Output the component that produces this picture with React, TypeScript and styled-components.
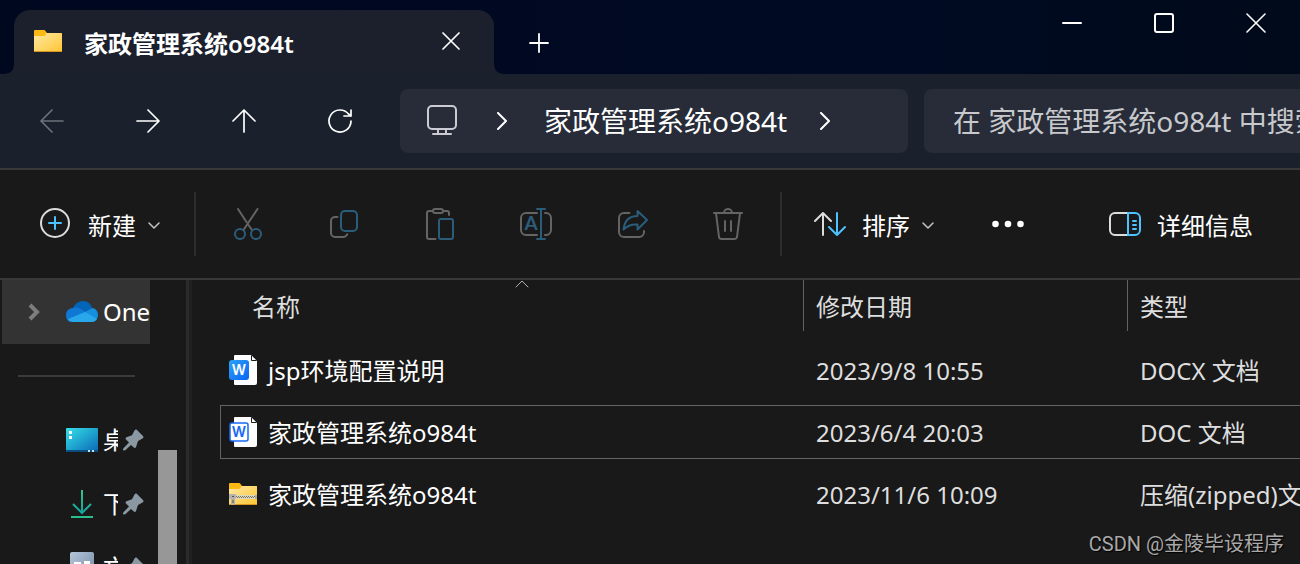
import React from "react";
import styled, { createGlobalStyle, css } from "styled-components";

const GlobalStyle = createGlobalStyle`
  *, *::before, *::after { box-sizing: border-box; }
  body {
    margin: 0;
    background: #191919;
    color: #ffffff;
    font-family: "Noto Sans", "Noto Sans CJK SC", sans-serif;
    font-size: 24px;
    line-height: 32px;
    overflow: hidden;
  }
  button, input {
    font: inherit;
    color: inherit;
    background: none;
    border: 0;
    margin: 0;
    padding: 0;
  }
  svg { display: block; flex: none; }
`;

const Window = styled.div`
  display: flex;
  flex-direction: column;
  height: 100vh;
  overflow: hidden;
`;

const TitleBar = styled.header`
  display: flex;
  height: 74px;
  padding-left: 14px;
  background: linear-gradient(90deg, #000820, #000a22 70%, #000a1a);
`;

const Tab = styled.div`
  position: relative;
  display: flex;
  align-items: center;
  width: 480px;
  margin-top: 10px;
  padding: 0 33px 2px 20px;
  border-radius: 16px 16px 0 0;
  background: #1b202c;

  &::before, &::after {
    content: "";
    position: absolute;
    bottom: 0;
    width: 8px;
    height: 8px;
  }
  &::before {
    right: 100%;
    background: radial-gradient(circle at 0 0, transparent 7px, #1b202c 8px);
  }
  &::after {
    left: 100%;
    background: radial-gradient(circle at 100% 0, transparent 7px, #1b202c 8px);
  }
`;

const TabTitle = styled.span`
  flex: 1;
  margin-left: 22px;
  padding-top: 6px;
  font-weight: 700;
  white-space: nowrap;
`;

const Latin = styled.span`
  font-weight: 600;
`;

const PlainButton = styled.button`
  display: flex;
  align-items: center;
  justify-content: center;
`;

const NewTab = styled(PlainButton)`
  width: 90px;
  padding-top: 12px;
`;

const WindowButtons = styled.div`
  display: flex;
  margin-left: auto;
  height: 46px;
`;

const WindowButton = styled(PlainButton)`
  width: 92px;
  padding-left: 4px;
`;

const NavBar = styled.nav`
  display: flex;
  align-items: center;
  height: 96px;
  padding-left: 4px;
  background: #1a202c;
  border-bottom: 2px solid #3b3838;
`;

const NavButton = styled(PlainButton)<{ $dim?: boolean }>`
  width: 96px;
  height: 64px;
  color: ${(p) => (p.$dim ? "#6d7078" : "#ffffff")};
`;

const field = css`
  height: 64px;
  font-size: 28px;
`;

const AddressBar = styled.div`
  ${field}
  display: flex;
  flex: 1;
  align-items: center;
  min-width: 0;
  margin-left: 12px;
  padding-left: 26px;
  border-radius: 8px;
  background: #272c38;
  white-space: nowrap;
`;

const PlaceIcon = styled.span`
  margin-right: 38px;
  padding-bottom: 2px;
`;

const Crumb = styled.button`
  padding: 0 32px 0 36px;
  line-height: 40px;
`;

const SearchBox = styled.input`
  ${field}
  width: 376px;
  margin-left: 16px;
  padding-left: 29px;
  border-radius: 8px 0 0 8px;
  background: #272c38;
  outline: none;

  &::placeholder { color: #c8c9cc; opacity: 1; }
`;

const CommandBar = styled.div`
  display: flex;
  align-items: center;
  height: 110px;
  padding: 0 47px 0 40px;
  border-bottom: 2px solid #3b3838;
`;

const Command = styled.button<{ $end?: boolean }>`
  display: flex;
  align-items: center;
  gap: 16px;
  height: 64px;
  margin-left: ${(p) => (p.$end ? "auto" : "0")};
  white-space: nowrap;
`;

const CommandLabel = styled.span`
  display: flex;
  align-items: center;
  gap: 12px;
  padding-top: 4px;
`;

const IconCommand = styled(PlainButton)`
  width: 96px;
  height: 64px;
`;

const Separator = styled.span<{ $before: number; $after: number }>`
  width: 2px;
  height: 64px;
  margin: 0 ${(p) => p.$after}px 0 ${(p) => p.$before}px;
  background: #2d2d2d;
`;

const More = styled(PlainButton)`
  width: 148px;
  height: 64px;
`;

const Body = styled.main`
  display: flex;
  flex: 1;
  min-height: 0;
`;

const Sidebar = styled.aside`
  display: flex;
  flex: none;
  width: 189px;
  padding-left: 2px;
  border-right: 3px solid #2b2b2b;
`;

const Tree = styled.div`
  width: 148px;
  overflow: hidden;
`;

const TreeRow = styled.div<{ $selected?: boolean }>`
  display: flex;
  align-items: center;
  height: 64px;
  padding-left: ${(p) => (p.$selected ? 24 : 64)}px;
  background: ${(p) => (p.$selected ? "#333333" : "transparent")};
  white-space: nowrap;
`;

const TreeLabel = styled.span<{ $clip?: boolean }>`
  flex: none;
  width: ${(p) => (p.$clip ? "15px" : "auto")};
  margin-left: 5px;
  overflow: hidden;
`;

const TreeDivider = styled.hr`
  height: 2px;
  margin: 31px 15px 31px 16px;
  border: 0;
  background: #3a3a3a;
`;

const Expander = styled(PlainButton)`
  width: 16px;
  height: 32px;
  margin-right: 24px;
`;

const Pin = styled.span`
  margin-left: 5px;
`;

const ScrollTrack = styled.div`
  width: 19px;
  margin-left: 8px;
  padding-top: 170px;
`;

const ScrollThumb = styled.div`
  height: 100%;
  background: #979797;
`;

const Listing = styled.section`
  flex: 1;
  min-width: 0;
  padding-left: 28px;
  border-left: 3px solid #202020;
  overflow: hidden;
`;

const Table = styled.table`
  width: calc(100% + 8px);
  margin-top: -8px;
  border-spacing: 0 8px;
  table-layout: fixed;
  color: #dedede;
`;

const Head = styled.th<{ $width?: number }>`
  width: ${(p) => (p.$width ? `${p.$width}px` : "auto")};
  height: 55px;
  padding: 0;
  font-weight: 400;
  text-align: left;
  vertical-align: top;
`;

const HeadLabel = styled.div<{ $first?: boolean }>`
  position: relative;
  height: 51px;
  margin-left: ${(p) => (p.$first ? 20 : 0)}px;
  padding: 11px 0 0 12px;
  border-left: ${(p) => (p.$first ? "0" : "1px solid #636363")};
`;

const SortCaret = styled.span`
  position: absolute;
  top: 0;
  left: calc(50% - 7px);
`;

const FileRow = styled.tr<{ $focused?: boolean }>`
  outline: ${(p) => (p.$focused ? "1px solid #636363" : "none")};
  outline-offset: -1px;
`;

const Cell = styled.td`
  height: 54px;
  padding: 0 0 0 13px;
  overflow: hidden;
  white-space: nowrap;
`;

const NameCell = styled(Cell)`
  padding-left: 9px;
  color: #ffffff;
`;

const FileName = styled.div`
  display: flex;
  align-items: center;
  gap: 11px;
`;

const CellText = styled.span`
  display: block;
  padding-top: 2px;
`;

const Watermark = styled.div`
  position: absolute;
  right: 16px;
  bottom: 6px;
  font-family: Roboto, "Noto Sans CJK SC", sans-serif;
  font-size: 20px;
  line-height: 28px;
  color: #a9a9a9;
  text-shadow: 1px 1px 1px #000000;
`;

const GRAY = "#646464";
const BLUE = "#2b5d7a";
const BRIGHT = "#4cc2ff";

type StrokeProps = {
  w?: number;
  h?: number;
  color?: string;
  width?: number;
  children: React.ReactNode;
};

const Stroke = ({ w = 32, h = 32, color = "currentColor", width = 2, children }: StrokeProps) => (
  <svg width={w} height={h} viewBox={`0 0 ${w} ${h}`} fill="none" stroke={color} strokeWidth={width} strokeLinecap="round" strokeLinejoin="round" aria-hidden="true">
    {children}
  </svg>
);

const FolderIcon = ({ zipped }: { zipped?: boolean }) => (
  <svg width="28" height="24" viewBox="0 0 28 24" aria-hidden="true">
    <defs>
      <linearGradient id="folder" x1="0" y1="0" x2="1" y2="1">
        <stop offset="0" stopColor="#ffe9a6" />
        <stop offset="1" stopColor="#ffc531" />
      </linearGradient>
    </defs>
    <path d="M0 2a1 1 0 0 1 1-1h8.500c1 0 1.500.3 2 1l1.500 2H27a1 1 0 0 1 1 1v4H0z" fill="#fdb813" />
    <path d="M0 7h9.500c1 0 1.500-.3 2-1l1-2H27a1 1 0 0 1 1 1v17a1 1 0 0 1-1 1H1a1 1 0 0 1-1-1z" fill="url(#folder)" />
    <path d="M0 22h28a1 1 0 0 1-1 1H1a1 1 0 0 1-1-1z" fill="#d9961c" />
    {zipped && (
      <>
        <path d="M5 13h23v4H5z" fill="#ddd6c0" />
        <path d="M7 14.500h20" stroke="#7a7360" strokeWidth="1" strokeDasharray="1 1" />
        <path d="M8 15.500h20" stroke="#7a7360" strokeWidth="1" strokeDasharray="1 1" />
        <path d="M0 12h6a1 1 0 0 1 1 1v3a1 1 0 0 1-1 1v5a1 1 0 0 1-1 1H3a1 1 0 0 1-1-1v-5H0z" fill="#b5b2ac" />
        <path d="M3 14h2v1H3zM3.500 18h1v3h-1z" fill="#55524c" />
        <path d="M26 13h2v4h-2z" fill="#a9a69c" />
      </>
    )}
  </svg>
);

const WordIcon = ({ outlined }: { outlined?: boolean }) => (
  <svg width="28" height="32" viewBox="0 0 28 32" aria-hidden="true">
    <defs>
      <linearGradient id="doc" x1="0" y1="0" x2="1" y2="1">
        <stop offset="0" stopColor="#2ba3f8" />
        <stop offset="1" stopColor="#0a64f5" />
      </linearGradient>
    </defs>
    <path d="M6 1h16l6 6v22a2 2 0 0 1-2 2H6a1 1 0 0 1-1-1V2a1 1 0 0 1 1-1z" fill="#fdfdff" />
    <path d="M22 1l6 6h-5a1 1 0 0 1-1-1z" fill="#191919" />
    <path d="M23 2l4 4h-4z" fill="#ffffff" />
    {outlined ? (
      <rect x="1" y="7" width="18" height="18" rx="2" fill="#ffffff" stroke="#1769f5" strokeWidth="1.500" />
    ) : (
      <rect x="0" y="6" width="20" height="20" rx="3" fill="url(#doc)" />
    )}
    <text x="10" y="21" textAnchor="middle" fontFamily="Inter, sans-serif" fontWeight="600" fontSize="14" fill={outlined ? "#1769f5" : "#ffffff"}>W</text>
  </svg>
);

const CloudIcon = () => (
  <svg width="32" height="22" viewBox="0 0 32 22" aria-hidden="true">
    <path d="M7 7C9 3 12 0 17 0c5 0 8 3 9 7l-9 6z" fill="#0364b8" />
    <path d="M7 7c3-1 6 0 8 1l9 6-20 7C1 20 0 17 0 14c0-4 3-7 7-7z" fill="#0f78d4" />
    <path d="M19 11l7-4c4 0 6 4 6 7 0 2-1 4-2 5l-12-5z" fill="#1490df" />
    <path d="M2 18l17-7 12 7c-1 2-3 3-5 3H7c-2 0-4-1-5-3z" fill="#28a8ea" />
  </svg>
);

const DesktopIcon = () => (
  <svg width="32" height="24" viewBox="0 0 32 24" aria-hidden="true">
    <defs>
      <linearGradient id="desktop" x1="0" y1="0" x2="1" y2="1">
        <stop offset="0" stopColor="#35e0e6" />
        <stop offset="1" stopColor="#0a68b8" />
      </linearGradient>
    </defs>
    <rect width="32" height="24" rx="1" fill="url(#desktop)" />
    <path d="M0 22h32v1a1 1 0 0 1-1 1H1a1 1 0 0 1-1-1z" fill="#0b4d7c" />
    <path d="M3 3h3v3H3zM3 8h3v3H3z" fill="#ffffff" />
    <path d="M22 22h2v2h-2zM26 22h2v2h-2z" fill="#c8e2f2" />
  </svg>
);

const DownloadIcon = () => (
  <svg width="32" height="32" viewBox="0 0 32 32" fill="none" strokeWidth="2" aria-hidden="true">
    <defs>
      <linearGradient id="download" gradientUnits="userSpaceOnUse" x1="0" y1="2" x2="0" y2="26">
        <stop offset="0" stopColor="#35c48a" />
        <stop offset="1" stopColor="#11a39f" />
      </linearGradient>
    </defs>
    <path d="M16 2v23M7 16l9 9 9-9" stroke="url(#download)" />
    <path d="M5 29h22" stroke="#2bbd90" />
  </svg>
);

const DocumentsIcon = () => (
  <svg width="32" height="32" viewBox="0 0 32 32" aria-hidden="true">
    <defs>
      <linearGradient id="documents" x1="0" y1="0" x2="1" y2="1">
        <stop offset="0" stopColor="#b6c6d8" />
        <stop offset="1" stopColor="#6c86a4" />
      </linearGradient>
    </defs>
    <rect x="4" y="0" width="24" height="32" rx="2" fill="url(#documents)" />
    <path d="M8 10h7v2H8zM18 9h6v3h-6z" fill="#ffffff" />
  </svg>
);

const PinIcon = () => (
  <svg width="22" height="22" viewBox="0 0 22 22" aria-hidden="true">
    <path d="M11.500 1.500c.5-1 1.500-1.300 2.500-.5l6 6c.8 1 .5 2-.5 2.500l-4.500 2.500-2 6c-.3 1-1.500 1.300-2.200.5L8 16 2 21.500 0 21.200.2 19.500l5.800-6L3 10.500c-.8-.8-.5-1.800.5-2.200l5.500-2z" fill="#8c98a1" />
  </svg>
);

const ChevronDown = () => (
  <Stroke w={12} h={8} color="#c4c4c4" width={1.5}><path d="M1 1l5 5 5-5" /></Stroke>
);

const ChevronRight = () => (
  <Stroke w={12} h={18}><path d="M2 1l8 8-8 8" /></Stroke>
);

const editCommands = [
  {
    name: "剪切",
    icon: (
      <Stroke color={GRAY}>
        <path d="M6 1l8.500 13M16.500 17l3.500 5M25.500 1L11.500 22" />
        <g stroke={BLUE}><circle cx="8" cy="26" r="5" /><circle cx="24" cy="26" r="5" /></g>
      </Stroke>
    ),
  },
  {
    name: "复制",
    icon: (
      <Stroke color={GRAY}>
        <path d="M9.500 9H7a4 4 0 0 0-4 4v12a4 4 0 0 0 4 4h8c2 0 3.500-1 4.300-2.800" />
        <rect x="13" y="3" width="16" height="20" rx="4" stroke={BLUE} />
      </Stroke>
    ),
  },
  {
    name: "粘贴",
    icon: (
      <Stroke color={GRAY}>
        <path d="M8 3H5a2 2 0 0 0-2 2v24a2 2 0 0 0 2 2h6.500M20 3h3a2 2 0 0 1 2 2v2" />
        <rect x="9" y="1" width="10" height="4" rx="2" />
        <rect x="15" y="11" width="14" height="20" rx="2" stroke={BLUE} />
      </Stroke>
    ),
  },
  {
    name: "重命名",
    icon: (
      <Stroke color={GRAY}>
        <path d="M17 5H6a5 5 0 0 0-5 5v12a5 5 0 0 0 5 5h11M25 5h1a5 5 0 0 1 5 5v12a5 5 0 0 1-5 5h-1" />
        <path d="M17 1h8M21 1v30M17 31h8" stroke={BLUE} />
        <text x="11" y="22" textAnchor="middle" fontFamily="Lato, sans-serif" fontWeight="700" fontSize="19" fill={BLUE} stroke="none">A</text>
      </Stroke>
    ),
  },
  {
    name: "共享",
    icon: (
      <Stroke color={GRAY}>
        <path d="M13.500 5H8a5 5 0 0 0-5 5v14a5 5 0 0 0 5 5h15a5 5 0 0 0 5-5v-1" />
        <path d="M21.500 3l9.500 9-9.500 9.500V16.500C15 16 11 18 7.500 21.500 8.500 13 13 8 21.500 8z" stroke={BLUE} />
      </Stroke>
    ),
  },
  {
    name: "删除",
    icon: (
      <Stroke color={GRAY}>
        <path d="M2 5h28M12 5a4 4 0 0 1 8 0M4 5l3 24a2.500 2.500 0 0 0 2.500 2h13a2.500 2.500 0 0 0 2.500-2l3-24M13 13v10M19 13v10" />
      </Stroke>
    ),
  },
];

const files = [
  { name: "jsp环境配置说明", date: "2023/9/8 10:55", type: "DOCX 文档", icon: <WordIcon /> },
  { name: "家政管理系统o984t", date: "2023/6/4 20:03", type: "DOC 文档", icon: <WordIcon outlined />, focused: true },
  { name: "家政管理系统o984t", date: "2023/11/6 10:09", type: "压缩(zipped)文件夹", icon: <FolderIcon zipped /> },
];

const places = [
  { name: "桌面", icon: <DesktopIcon /> },
  { name: "下载", icon: <DownloadIcon /> },
  { name: "文档", icon: <DocumentsIcon /> },
];

export default function App() {
  return (
    <Window>
      <GlobalStyle />
      <TitleBar>
        <Tab>
          <FolderIcon />
          <TabTitle>家政管理系统<Latin>o984t</Latin></TabTitle>
          <PlainButton aria-label="关闭标签页">
            <Stroke w={20} h={20} width={1.7}><path d="M2 2l16 16M18 2L2 18" /></Stroke>
          </PlainButton>
        </Tab>
        <NewTab aria-label="新建标签页">
          <Stroke w={20} h={20} width={1.8}><path d="M10 1v18M1 10h18" /></Stroke>
        </NewTab>
        <WindowButtons>
          <WindowButton aria-label="最小化"><Stroke w={20} h={20}><path d="M1 10h18" /></Stroke></WindowButton>
          <WindowButton aria-label="最大化"><Stroke w={20} h={20}><rect x="1" y="1" width="18" height="18" rx="2" /></Stroke></WindowButton>
          <WindowButton aria-label="关闭"><Stroke w={20} h={20} width={1.6}><path d="M1 1l18 18M19 1L1 19" /></Stroke></WindowButton>
        </WindowButtons>
      </TitleBar>

      <NavBar>
        <NavButton $dim aria-label="后退"><Stroke w={24} h={24} width={1.7}><path d="M23 12H1M12 1L1 12l11 11" /></Stroke></NavButton>
        <NavButton aria-label="前进"><Stroke w={24} h={24} width={1.7}><path d="M1 12h22M12 1l11 11-11 11" /></Stroke></NavButton>
        <NavButton aria-label="上移"><Stroke w={24} h={24} width={1.7}><path d="M12 23V1M1 12L12 1l11 11" /></Stroke></NavButton>
        <NavButton aria-label="刷新"><Stroke w={24} h={24} width={1.7}><path d="M23 12a11 11 0 1 1-2.500-7L23 7M23 1v6h-7" /></Stroke></NavButton>
        <AddressBar>
          <PlaceIcon>
            <Stroke w={32} h={32} color="#cbccd1">
              <rect x="2" y="2" width="28" height="23" rx="4" />
              <path d="M12 25v5M20 25v5M7 30h18" />
            </Stroke>
          </PlaceIcon>
          <ChevronRight />
          <Crumb>家政管理系统o984t</Crumb>
          <ChevronRight />
        </AddressBar>
        <SearchBox type="text" aria-label="搜索" placeholder="在 家政管理系统o984t 中搜索" />
      </NavBar>

      <CommandBar>
        <Command>
          <Stroke color="#dcdcdc">
            <circle cx="15" cy="15" r="14" />
            <path d="M15 9v12M9 15h12" stroke={BRIGHT} />
          </Stroke>
          <CommandLabel>新建<ChevronDown /></CommandLabel>
        </Command>
        <Separator $before={34} $after={4} />
        {editCommands.map((c) => (
          <IconCommand key={c.name} aria-label={c.name}>{c.icon}</IconCommand>
        ))}
        <Separator $before={4} $after={32} />
        <Command>
          <Stroke color="#dcdcdc">
            <path d="M9 27V5M1 13l8-8 8 8" />
            <path d="M23 5v22M15 19l8 8 8-8" stroke={BRIGHT} />
          </Stroke>
          <CommandLabel>排序<ChevronDown /></CommandLabel>
        </Command>
        <More aria-label="更多">
          <svg width="32" height="8" viewBox="0 0 32 8" fill="#ffffff" aria-hidden="true">
            <circle cx="3.500" cy="4" r="3.300" /><circle cx="16" cy="4" r="3.300" /><circle cx="28.500" cy="4" r="3.300" />
          </svg>
        </More>
        <Command $end>
          <Stroke color="#dcdcdc">
            <path d="M19 5H6a5 5 0 0 0-5 5v12a5 5 0 0 0 5 5h13" />
            <path d="M19 5h7a5 5 0 0 1 5 5v12a5 5 0 0 1-5 5h-7zM24 13h3M24 17h3M24 21h3" stroke={BRIGHT} />
          </Stroke>
          <CommandLabel>详细信息</CommandLabel>
        </Command>
      </CommandBar>

      <Body>
        <Sidebar>
          <Tree>
            <TreeRow $selected>
              <Expander aria-label="展开">
                <Stroke w={16} h={20} color="#7d7d7d" width={4}><path d="M4 3l7 7-7 7" strokeLinecap="butt" strokeLinejoin="miter" /></Stroke>
              </Expander>
              <CloudIcon />
              <TreeLabel>OneDrive</TreeLabel>
            </TreeRow>
            <TreeDivider />
            {places.map((p) => (
              <TreeRow key={p.name}>
                {p.icon}
                <TreeLabel $clip>{p.name}</TreeLabel>
                <Pin><PinIcon /></Pin>
              </TreeRow>
            ))}
          </Tree>
          <ScrollTrack><ScrollThumb /></ScrollTrack>
        </Sidebar>

        <Listing>
          <Table>
            <thead>
              <tr>
                <Head>
                  <HeadLabel $first>
                    名称
                    <SortCaret><Stroke w={14} h={8} color="#b0b0b0" width={1}><path d="M1 7l6-6 6 6" /></Stroke></SortCaret>
                  </HeadLabel>
                </Head>
                <Head $width={324}><HeadLabel>修改日期</HeadLabel></Head>
                <Head $width={181}><HeadLabel>类型</HeadLabel></Head>
              </tr>
            </thead>
            <tbody>
              {files.map((f) => (
                <FileRow key={f.type} $focused={f.focused}>
                  <NameCell><FileName>{f.icon}<CellText>{f.name}</CellText></FileName></NameCell>
                  <Cell><CellText>{f.date}</CellText></Cell>
                  <Cell><CellText>{f.type}</CellText></Cell>
                </FileRow>
              ))}
            </tbody>
          </Table>
        </Listing>
      </Body>
      <Watermark>CSDN @金陵毕设程序</Watermark>
    </Window>
  );
}
